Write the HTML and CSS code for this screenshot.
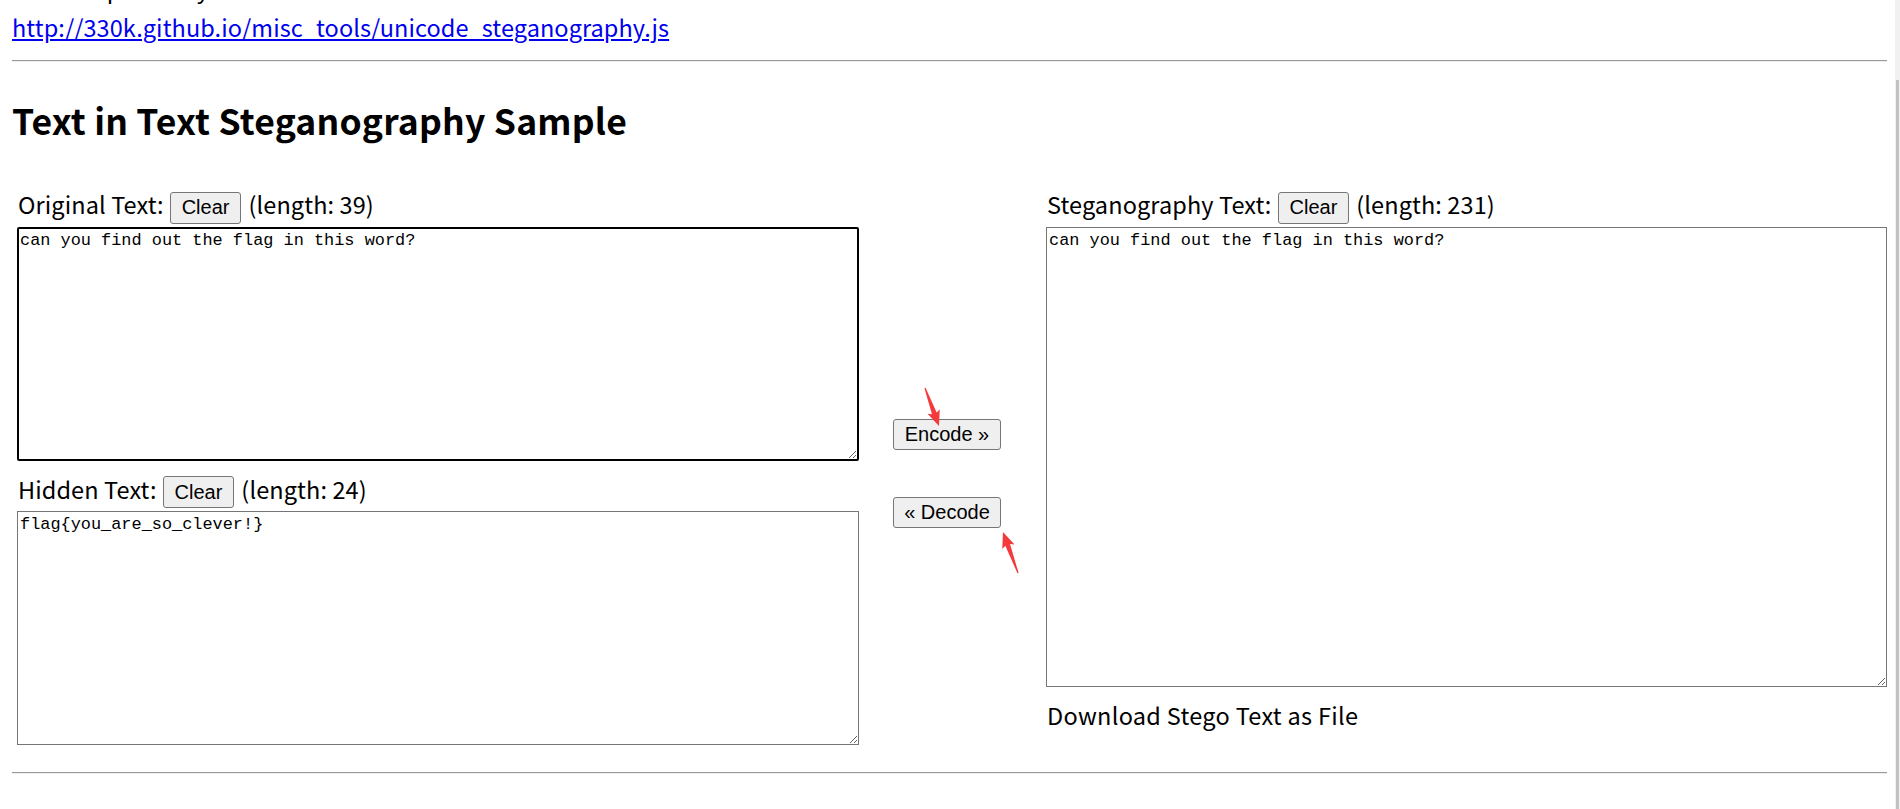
FILE: index.html
```html
<!DOCTYPE html>
<html lang="en">
<head>
<meta charset="utf-8">
<title>Text in Text Steganography Sample</title>
<link rel="stylesheet" href="styles.css">
</head>
<body>
<p class="cut">JavaScript library is available at:</p>
<p class="src"><a href="#">http://330k.github.io/misc_tools/unicode_steganography.js</a></p>
<hr class="rule">
<h2 class="title">Text in Text Steganography Sample</h2>
<div class="sample">
  <div class="col col-left">
    <div class="label-row"><span class="label">Original Text:</span><button class="btn">Clear</button><span class="label">(length: 39)</span></div>
    <textarea class="ta ta-original">can you find out the flag in this word?</textarea>
    <div class="label-row label-row-second"><span class="label">Hidden Text:</span><button class="btn">Clear</button><span class="label">(length: 24)</span></div>
    <textarea class="ta ta-hidden">flag{you_are_so_clever!}</textarea>
  </div>
  <div class="col col-mid">
    <button class="btn btn-wide">Encode »</button>
    <button class="btn btn-wide">« Decode</button>
  </div>
  <div class="col col-right">
    <div class="label-row"><span class="label">Steganography Text:</span><button class="btn">Clear</button><span class="label">(length: 231)</span></div>
    <textarea class="ta ta-stego">can you find out the flag in this word?</textarea>
    <div class="download">Download Stego Text as File</div>
  </div>
</div>
<hr class="rule rule-bottom">

<svg class="annot" width="1900" height="809" viewBox="0 0 1900 809" aria-hidden="true">
  <g transform="translate(925 388) rotate(69.8)">
    <polygon points="0,-0.6 27,-2.5 25,-6.5 40.5,0 25,6.5 27,2.5 0,0.6"/>
  </g>
  <g transform="translate(1018 573) rotate(-110.1)">
    <polygon points="0,-0.6 30,-2.5 28,-6.5 43.7,0 28,6.5 30,2.5 0,0.6"/>
  </g>
</svg>
<div class="scrollbar"><div class="thumb"></div></div>
</body>
</html>
```
FILE: styles.css
```css
html {
  overflow: hidden;
}
body {
  margin: 0;
  padding: 0 13px 0 12px;
  font-family: "Noto Sans CJK JP", "Noto Sans", sans-serif;
  font-size: 23.5px;
  line-height: 30px;
  letter-spacing: 0.3px;
  color: #000;
  background: #fff;
}
.cut {
  margin: -27px 0 0;
  white-space: nowrap;
}
.src {
  margin: 9px 0 0;
  letter-spacing: 0.07px;
}
.src a {
  color: #0000ee;
  text-decoration: underline;
}
.rule {
  margin: 18px 0 0;
  height: 0;
  border: 0;
  border-top: 1px solid #9a9a9a;
  border-bottom: 1px solid #eeeeee;
}
.rule-bottom {
  margin-top: 27px;
}
.title {
  margin: 38px 0 0;
  font-size: 35.5px;
  line-height: 40px;
  font-weight: 700;
  letter-spacing: 0.2px;
}
.sample {
  display: flex;
  margin-top: 48px;
  padding-left: 5px;
}
.col-left {
  width: 842px;
}
.col-mid {
  width: 108px;
  margin-left: 34px;
  padding-top: 14px;
  display: flex;
  flex-direction: column;
  justify-content: center;
  gap: 47px;
}
.col-right {
  width: 841px;
  margin-left: 45px;
}
.label-row {
  display: flex;
  align-items: baseline;
  gap: 6px;
  padding-left: 1px;
}
.label-row .btn + .label {
  margin-left: 1px;
}
.label {
  line-height: 32px;
  letter-spacing: 0.1px;
  white-space: nowrap;
}
.label-row-second {
  margin-top: 12px;
}
.btn {
  font-family: "Liberation Sans", Arial, sans-serif;
  font-size: 20px;
  line-height: 23px;
  letter-spacing: 0;
  padding: 3.5px 11px;
  margin: 0;
  color: #000;
  background: #efefef;
  border: 1px solid #767676;
  border-radius: 3px;
}
.btn-wide {
  width: 108px;
  padding: 3px 0;
}
.ta {
  display: block;
  box-sizing: border-box;
  width: 100%;
  margin: 3px 0 0;
  padding: 3px 2px;
  border: 1px solid #767676;
  border-radius: 0;
  font-family: "Liberation Mono", monospace;
  font-size: 16.9px;
  line-height: 19px;
  letter-spacing: 0;
  color: #000;
  background: #fff;
  resize: both;
}
.ta-original {
  height: 234px;
  border: 2px solid #000;
  border-radius: 2px;
  padding: 2px 1px;
}
.ta-hidden {
  height: 234px;
}
.ta-stego {
  height: 460px;
}
.download {
  margin-top: 12px;
  line-height: 32px;
  padding-left: 1px;
}
.annot {
  position: absolute;
  top: 0;
  left: 0;
  pointer-events: none;
  fill: #f43a3a;
}
.scrollbar {
  position: fixed;
  top: 0;
  right: 0;
  width: 5px;
  height: 100%;
  background: #f1f1f1;
}
.thumb {
  position: absolute;
  top: 80px;
  right: 1px;
  bottom: 0;
  width: 3px;
  background: #c1c1c1;
}
```
